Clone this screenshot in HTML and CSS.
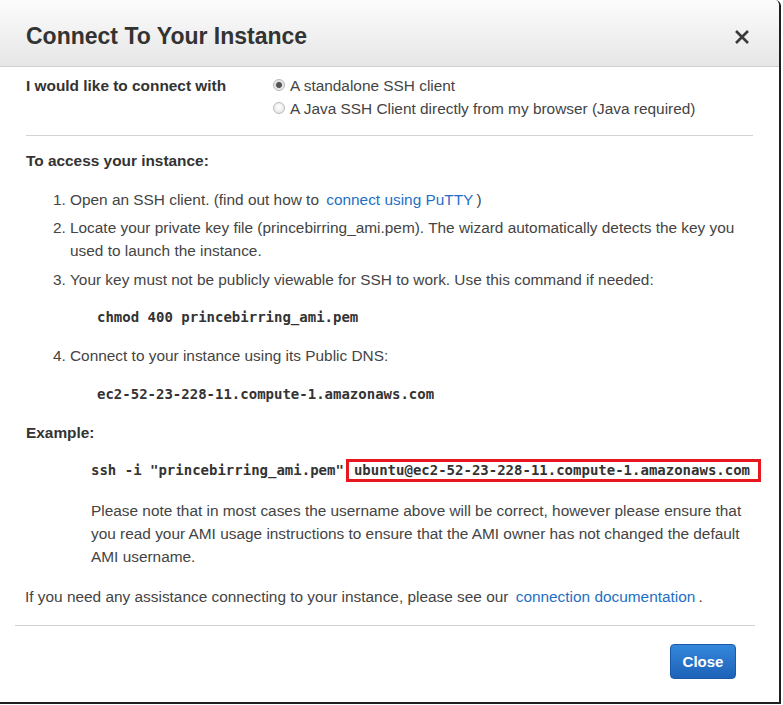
FILE: index.html
```html
<!DOCTYPE html>
<html>
<head>
<meta charset="utf-8">
<link rel="stylesheet" href="styles.css">
</head>
<body>
<div class="modal">
  <div class="modal-header">
    <h1 class="title">Connect To Your Instance</h1>
    <span class="close-x" aria-label="close">
      <svg width="16" height="16" viewBox="0 0 16 16"><path d="M2 2 L14 14 M14 2 L2 14" stroke="#3a3a3a" stroke-width="2.6" fill="none"/></svg>
    </span>
  </div>
  <div class="modal-body">
    <div class="connect-row">
      <div class="connect-label">I would like to connect with</div>
      <div class="radios">
        <label class="radio-line"><input type="radio" name="c" checked><span>A standalone SSH client</span></label>
        <label class="radio-line"><input type="radio" name="c"><span>A Java SSH Client directly from my browser (Java required)</span></label>
      </div>
    </div>
    <hr class="sep">
    <div class="heading">To access your instance:</div>
    <ol class="steps">
      <li class="step">Open an SSH client. (find out how to <a class="link" href="#">connect using PuTTY</a>)</li>
      <li class="step">Locate your private key file (princebirring_ami.pem). The wizard automatically detects the key you used to launch the instance.</li>
      <li class="step">Your key must not be publicly viewable for SSH to work. Use this command if needed:
        <div class="code code-step">chmod 400 princebirring_ami.pem</div>
      </li>
      <li class="step">Connect to your instance using its Public DNS:
        <div class="code code-step code-dns">ec2-52-23-228-11.compute-1.amazonaws.com</div>
      </li>
    </ol>
    <div class="heading heading-example">Example:</div>
    <div class="example">
      <div class="code code-ssh">ssh -i "princebirring_ami.pem"<span class="highlight">ubuntu@ec2-52-23-228-11.compute-1.amazonaws.com</span></div>
      <p class="note">Please note that in most cases the username above will be correct, however please ensure that you read your AMI usage instructions to ensure that the AMI owner has not changed the default AMI username.</p>
    </div>
    <p class="assist">If you need any assistance connecting to your instance, please see our <a class="link" href="#">connection documentation</a>.</p>
  </div>
  <hr class="sep-footer">
  <div class="modal-footer">
    <button class="btn-close">Close</button>
  </div>
</div>
</body>
</html>
```
FILE: styles.css
```css
html, body {
  margin: 0;
  padding: 0;
  background: #fff;
}
body {
  font-family: "Liberation Sans", Arial, sans-serif;
  font-size: 15.4px;
  color: #444;
}
.modal {
  width: 779px;
  height: 702px;
  background: #fff;
  border-right: 2px solid #1e1e1e;
  border-bottom: 2px solid #1e1e1e;
  border-top-right-radius: 6px;
  overflow: hidden;
  display: flex;
  flex-direction: column;
}
.modal-header {
  height: 66px;
  flex: none;
  background: linear-gradient(#fcfcfc, #e6e6e6);
  border-bottom: 1px solid #cfcfcf;
  display: flex;
  align-items: center;
  justify-content: space-between;
  padding: 0 29px 0 26px;
}
.title {
  margin: 0;
  font-size: 23px;
  font-weight: bold;
  color: #333;
  padding-top: 6px;
}
.close-x {
  display: flex;
  margin-top: 8px;
}
.modal-body {
  padding: 0 26px;
  line-height: 23px;
}
.connect-row {
  display: flex;
  padding-top: 7px;
}
.connect-label {
  width: 247px;
  font-weight: bold;
  color: #333;
}
.radios {
  display: flex;
  flex-direction: column;
}
.radio-line {
  display: flex;
  align-items: center;
}
.radio-line input {
  appearance: none;
  -webkit-appearance: none;
  width: 12px;
  height: 12px;
  margin: 0 5px 0 0;
  border-radius: 50%;
  border: 1px solid #b8b8b8;
  background: radial-gradient(circle at 50% 40%, #fff, #e2e2e2);
  position: relative;
  top: -1px;
}
.radio-line input:checked {
  background: radial-gradient(circle, #555 0 2.5px, #e0e0e0 3.5px, #f5f5f5 6px);
}
.sep {
  border: 0;
  border-top: 1px solid #d2d2d2;
  margin: 15px 0 0 0;
}
.heading {
  font-weight: bold;
  color: #333;
  margin-top: 13px;
}
.steps {
  margin: 16px 0 0 0;
  padding-left: 44px;
}
.step {
  margin-bottom: 5px;
}
.step:nth-child(2) {
  margin-bottom: 6px;
}
.code {
  font-family: "DejaVu Sans Mono", "Liberation Mono", monospace;
  font-weight: bold;
  font-size: 14px;
  color: #333;
  line-height: 23px;
}
.code-step {
  margin: 15px 0 15px 27px;
}
.code-dns {
  margin-top: 16px;
}
.heading-example {
  margin-top: 3px;
}
.example {
  padding-left: 65px;
}
.code-ssh {
  margin-top: 15px;
  white-space: nowrap;
  display: flex;
  align-items: center;
}
.highlight {
  border: 3px solid #e8161f;
  margin-left: 2px;
  padding: 0 8px 0 5px;
  line-height: 17px;
}
.note {
  margin: 17px 0 0 0;
}
.assist {
  margin: 17px 0 0 0;
  margin-left: -1px;
}
.link {
  color: #1f6fc5;
  text-decoration: none;
  margin-left: 3px;
  margin-right: 3px;
}
.sep-footer {
  border: 0;
  border-top: 1px solid #d2d2d2;
  margin: 17px 24px 0 15px;
}
.modal-footer {
  display: flex;
  justify-content: flex-end;
  padding: 18px 43px 0 0;
}
.btn-close {
  width: 66px;
  height: 35px;
  border: 1px solid #1b5aa6;
  border-radius: 4px;
  background: linear-gradient(#3487db, #1c62b8);
  color: #fff;
  font-family: "Liberation Sans", Arial, sans-serif;
  font-weight: bold;
  font-size: 15px;
  padding: 0;
}
```
